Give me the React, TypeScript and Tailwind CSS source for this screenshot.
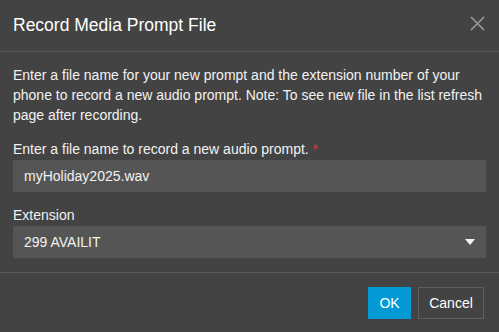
const App = () => {
  return (
    <div className="w-[499px] h-[332px] bg-[#434343] text-[#f2f2f2] font-['Liberation_Sans',Arial,sans-serif] flex flex-col">
      {/* Header */}
      <div className="h-[52px] flex items-center justify-between pl-[13px] pr-[14px] border-b border-[#5a5a5a]">
        <h1 className="text-[17.5px] text-white">Record Media Prompt File</h1>
        <svg width="15" height="15" viewBox="0 0 15 15" className="text-[#9a9a9a] -mt-[4px]">
          <path d="M1 1L14 14M14 1L1 14" stroke="currentColor" strokeWidth="1.6" />
        </svg>
      </div>

      {/* Body */}
      <div className="flex flex-col px-[13px] pt-[13px] pb-[14px] border-b border-[#5a5a5a]">
        <p className="text-[14px] leading-[20px]">
          Enter a file name for your new prompt and the extension number of your phone to record a new audio prompt.
          Note: To see new file in the list refresh page after recording.
        </p>
        <label className="mt-[15px] text-[14px] leading-[18px]">
          Enter a file name to record a new audio prompt. <span className="text-[#e0343e]">*</span>
        </label>
        <div className="mt-[2px] h-[32px] bg-[#555555] flex items-center px-[11px] text-[14px]">
          myHoliday2025.wav
        </div>
        <label className="mt-[14px] text-[14px] leading-[18px]">Extension</label>
        <div className="mt-[2px] h-[32px] bg-[#555555] flex items-center justify-between pl-[11px] pr-[11px] text-[14px]">
          <span>299 AVAILIT</span>
          <svg width="10" height="6" viewBox="0 0 10 6">
            <path d="M0 0H10L5 6Z" fill="#f2f2f2" />
          </svg>
        </div>
      </div>

      {/* Footer */}
      <div className="flex justify-end gap-[7px] pr-[15px] pt-[14px]">
        <button className="h-[32px] w-[43px] bg-[#0299d4] text-white text-[14px]">OK</button>
        <button className="h-[32px] w-[66px] border border-[#5e5e5e] text-white text-[14px]">Cancel</button>
      </div>
    </div>
  );
};

export default App;
